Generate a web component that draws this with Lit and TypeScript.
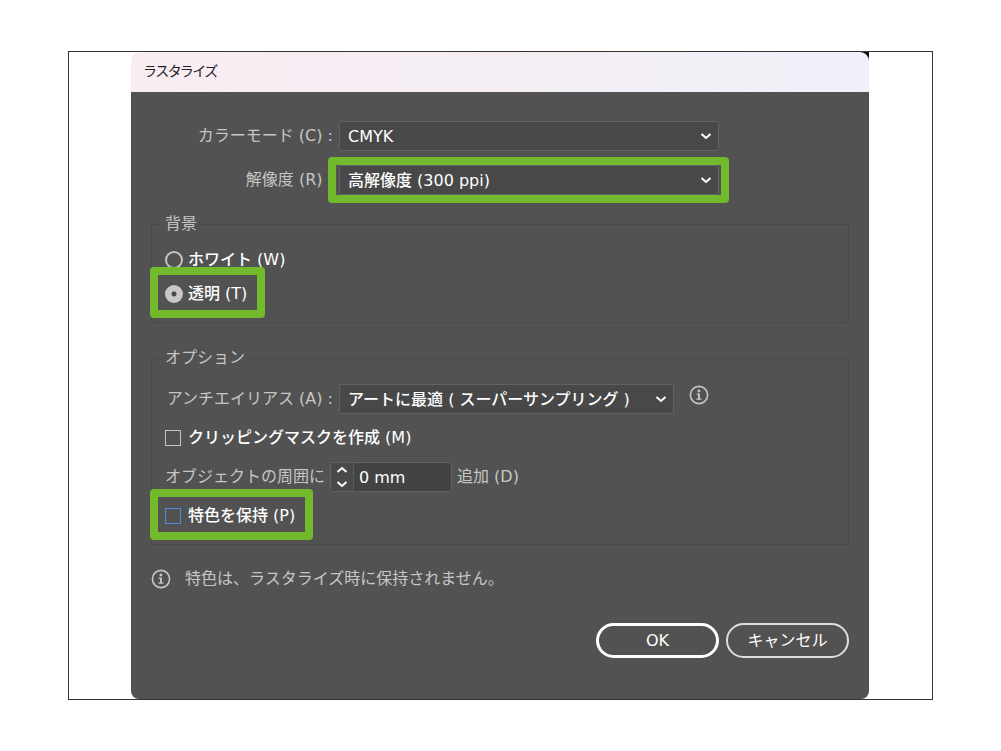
import { LitElement, html, css, svg } from "lit";
import { customElement, property, state } from "lit/decorators.js";

const infoIcon = html`<svg class="info" viewBox="0 0 20 20" width="20" height="20" aria-hidden="true">
  <circle cx="10" cy="10" r="8.6" fill="none" stroke="currentColor" stroke-width="1.6"></circle>
  <circle cx="9.9" cy="6" r="1.4" fill="currentColor"></circle>
  <path d="M7.6 8.6h3.3v5h1.6v1.2H7.4v-1.2h1.6V9.8H7.6z" fill="currentColor"></path>
</svg>`;

const chevron = svg`<path d="M1.5 2 L6 6 L10.5 2" fill="none" stroke="currentColor" stroke-width="2"></path>`;

@customElement("drop-down")
class DropDown extends LitElement {
  @property() label = "";
  @property({ type: Array }) options: string[] = [];

  static styles = css`
    :host {
      display: block;
      position: relative;
      color: #fff;
      font-weight: 500;
    }
    .box {
      display: block;
      box-sizing: border-box;
      width: 100%;
      height: 30px;
      margin: 0;
      padding: 2px 32px 0 8px;
      border: 1px solid #5f6462;
      border-radius: 2px;
      background: #484848;
      color: inherit;
      font: inherit;
      appearance: none;
    }
    .arrow {
      position: absolute;
      right: 7px;
      top: 11px;
      pointer-events: none;
    }
  `;

  render() {
    return html`<select class="box" aria-label=${this.label}>
        ${this.options.map((o) => html`<option>${o}</option>`)}
      </select>
      <svg class="arrow" width="12" height="8" viewBox="0 0 12 8" aria-hidden="true">${chevron}</svg>`;
  }
}

@customElement("app-root")
class AppRoot extends LitElement {
  @state() background = "clear";

  static styles = css`
    :host {
      display: block;
      padding: 51px 68px;
      background: #fff;
      color: #c6c6c6;
      font: 16px/20px "DejaVu Sans", "Noto Sans CJK JP", sans-serif;
    }
    .frame {
      border: 1px solid #3b3330;
      padding: 0 63px 0 62px;
      background: #fff;
    }
    .dialog {
      border-radius: 0 0 8px 8px;
      background: #525252;
      overflow: hidden;
    }
    .titleback {
      background: linear-gradient(to right, #fff 50%, #111 50%);
    }
    .title {
      margin: 0;
      padding: 8px 13px 12px;
      border-radius: 9px 9px 0 0;
      background: linear-gradient(to right, #f8edf3, #f4eef4 50%, #f1f0f8);
      color: #222;
      font: 14px/20px "Noto Sans CJK JP", sans-serif;
      font-feature-settings: "palt";
    }
    .body {
      padding: 29px 20px 41px;
    }
    .row {
      display: flex;
      align-items: center;
    }
    .modes {
      display: grid;
      grid-template-columns: 182px 380px;
      column-gap: 6px;
      row-gap: 14px;
      align-items: center;
    }
    .name {
      text-align: right;
      white-space: nowrap;
    }
    .marked {
      position: relative;
    }
    .marked::after {
      content: "";
      position: absolute;
      inset: -8px -10px -8px -11px;
      border: 8px solid #72b92b;
      border-radius: 4px;
      pointer-events: none;
    }
    .choice.marked::after {
      inset: -17px -18px -14px -15px;
    }
    .group {
      min-width: 0;
      margin: 19px 0 0;
      padding: 0 9px 18px;
      border: 1px solid #4a4a4a;
      border-radius: 2px;
    }
    .group + .group {
      margin-top: 25px;
    }
    .legend {
      padding: 0 4px;
    }
    .items {
      display: flex;
      flex-direction: column;
      align-items: flex-start;
      gap: 14px;
      padding: 16px 4px 0;
    }
    .choice {
      display: flex;
      align-items: center;
      gap: 5px;
      color: #fff;
      font-weight: 500;
    }
    .radio,
    .check {
      box-sizing: border-box;
      flex: none;
      margin: 0;
      appearance: none;
      border: 2px solid #c4c4c4;
    }
    .radio {
      width: 18px;
      height: 18px;
      border-radius: 50%;
    }
    .radio:checked {
      border: none;
      background: radial-gradient(circle, #484848 0 2px, #c8c8c8 3px);
    }
    .check {
      width: 16px;
      height: 16px;
      margin-right: 2px;
      border-width: 1px;
    }
    .accent {
      border-color: #4a90d9;
    }
    .aliasing {
      gap: 6px;
    }
    .aliasing .name {
      width: 168px;
    }
    .aliasing drop-down {
      width: 335px;
    }
    .info {
      display: block;
      flex: none;
    }
    .aliasing .info {
      margin: 0 0 8px 9px;
    }
    .offset {
      gap: 5px;
    }
    .stepper {
      display: flex;
      box-sizing: border-box;
      width: 122px;
      height: 30px;
      border: 1px solid #5f6462;
      border-radius: 2px;
      background: #434343;
    }
    .steps {
      display: flex;
      flex-direction: column;
      flex: none;
      width: 22px;
      border-right: 1px solid #5a5a5a;
      background: #494949;
    }
    .step {
      display: flex;
      flex: 1;
      align-items: center;
      justify-content: center;
      padding: 0;
      border: none;
      background: none;
      color: #fff;
    }
    .flip {
      transform: scaleY(-1);
    }
    .amount {
      flex: 1;
      min-width: 0;
      padding: 2px 0 0 5px;
      border: none;
      background: none;
      color: #fff;
      font: inherit;
    }
    .note {
      margin: 24px 0 34px;
      gap: 14px;
    }
    .actions {
      display: flex;
      justify-content: flex-end;
      gap: 7px;
    }
    .button {
      box-sizing: border-box;
      width: 123px;
      height: 35px;
      padding: 0;
      border: 2px solid #e2dede;
      border-radius: 18px;
      background: none;
      color: #fff;
      font: inherit;
    }
    .primary {
      border: 3px solid #fff;
    }
  `;

  render() {
    return html`<main class="frame">
      <section class="dialog" role="dialog" aria-labelledby="title">
        <header class="titleback"><h1 class="title" id="title">ラスタライズ</h1></header>
        <form class="body" lang="ja" @submit=${(e: Event) => e.preventDefault()}>
          <div class="modes">
            <label class="name" for="mode">カラーモード (C) :</label>
            <drop-down id="mode" label="カラーモード (C)" .options=${["CMYK", "RGB"]}></drop-down>
            <label class="name" for="resolution">解像度 (R) :</label>
            <drop-down
              id="resolution"
              class="marked"
              label="解像度 (R)"
              .options=${["高解像度 (300 ppi)", "標準 (150 ppi)"]}
            ></drop-down>
          </div>

          <fieldset class="group">
            <legend class="legend">背景</legend>
            <div class="items">
              <label class="choice"
                ><input
                  class="radio"
                  type="radio"
                  name="bg"
                  .checked=${this.background === "white"}
                  @change=${() => (this.background = "white")}
                /><span>ホワイト (W)</span></label
              >
              <label class="choice marked"
                ><input
                  class="radio"
                  type="radio"
                  name="bg"
                  .checked=${this.background === "clear"}
                  @change=${() => (this.background = "clear")}
                /><span>透明 (T)</span></label
              >
            </div>
          </fieldset>

          <fieldset class="group">
            <legend class="legend">オプション</legend>
            <div class="items">
              <div class="row aliasing">
                <label class="name" for="alias">アンチエイリアス (A) :</label>
                <drop-down
                  id="alias"
                  label="アンチエイリアス (A)"
                  .options=${["アートに最適 ( スーパーサンプリング )", "なし"]}
                ></drop-down>
                ${infoIcon}
              </div>
              <label class="choice"
                ><input class="check" type="checkbox" /><span>クリッピングマスクを作成 (M)</span></label
              >
              <div class="row offset">
                <label for="amount">オブジェクトの周囲に</label>
                <div class="stepper">
                  <div class="steps">
                    <button class="step" type="button" aria-label="+">
                      <svg class="flip" width="12" height="8" viewBox="0 0 12 8">${chevron}</svg>
                    </button>
                    <button class="step" type="button" aria-label="-">
                      <svg width="12" height="8" viewBox="0 0 12 8">${chevron}</svg>
                    </button>
                  </div>
                  <input class="amount" id="amount" type="text" value="0 mm" />
                </div>
                <span>追加 (D)</span>
              </div>
              <label class="choice marked"
                ><input class="check accent" type="checkbox" /><span>特色を保持 (P)</span></label
              >
            </div>
          </fieldset>

          <div class="row note">${infoIcon}<span>特色は、ラスタライズ時に保持されません。</span></div>
          <div class="actions">
            <button class="button primary" type="submit">OK</button>
            <button class="button" type="button">キャンセル</button>
          </div>
        </form>
      </section>
    </main>`;
  }
}
